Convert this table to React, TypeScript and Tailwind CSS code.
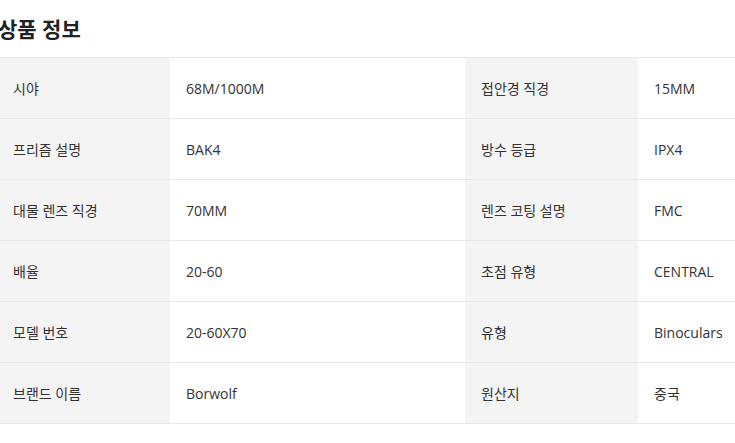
const rows: [string, string, string, string][] = [
  ['시야', '68M/1000M', '접안경 직경', '15MM'],
  ['프리즘 설명', 'BAK4', '방수 등급', 'IPX4'],
  ['대물 렌즈 직경', '70MM', '렌즈 코팅 설명', 'FMC'],
  ['배율', '20-60', '초점 유형', 'CENTRAL'],
  ['모델 번호', '20-60X70', '유형', 'Binoculars'],
  ['브랜드 이름', 'Borwolf', '원산지', '중국'],
];

export default function App() {
  return (
    <div
      className="w-[735px] h-[443px] overflow-hidden bg-white text-[#333]"
      style={{ fontFamily: '"Open Sans", "Noto Sans CJK KR", sans-serif' }}
    >
      <h2 className="-ml-[2px] pt-[14px] h-[57px] text-[21px] font-bold leading-[30px] text-[#222]">
        상품 정보
      </h2>
      <div className="w-[760px] border-t border-[#e8e8e8]">
        {rows.map((r) => (
          <div
            key={r[0]}
            className="grid grid-cols-[170px_295px_173px_1fr] h-[61px] border-b border-[#e8e8e8] text-[14px]"
          >
            <div className="flex items-center bg-[#f4f4f4] pl-[13px]">{r[0]}</div>
            <div className="flex items-center pl-[16px]">{r[1]}</div>
            <div className="flex items-center bg-[#f4f4f4] pl-[16px]">{r[2]}</div>
            <div className="flex items-center pl-[16px]">{r[3]}</div>
          </div>
        ))}
      </div>
    </div>
  );
}
